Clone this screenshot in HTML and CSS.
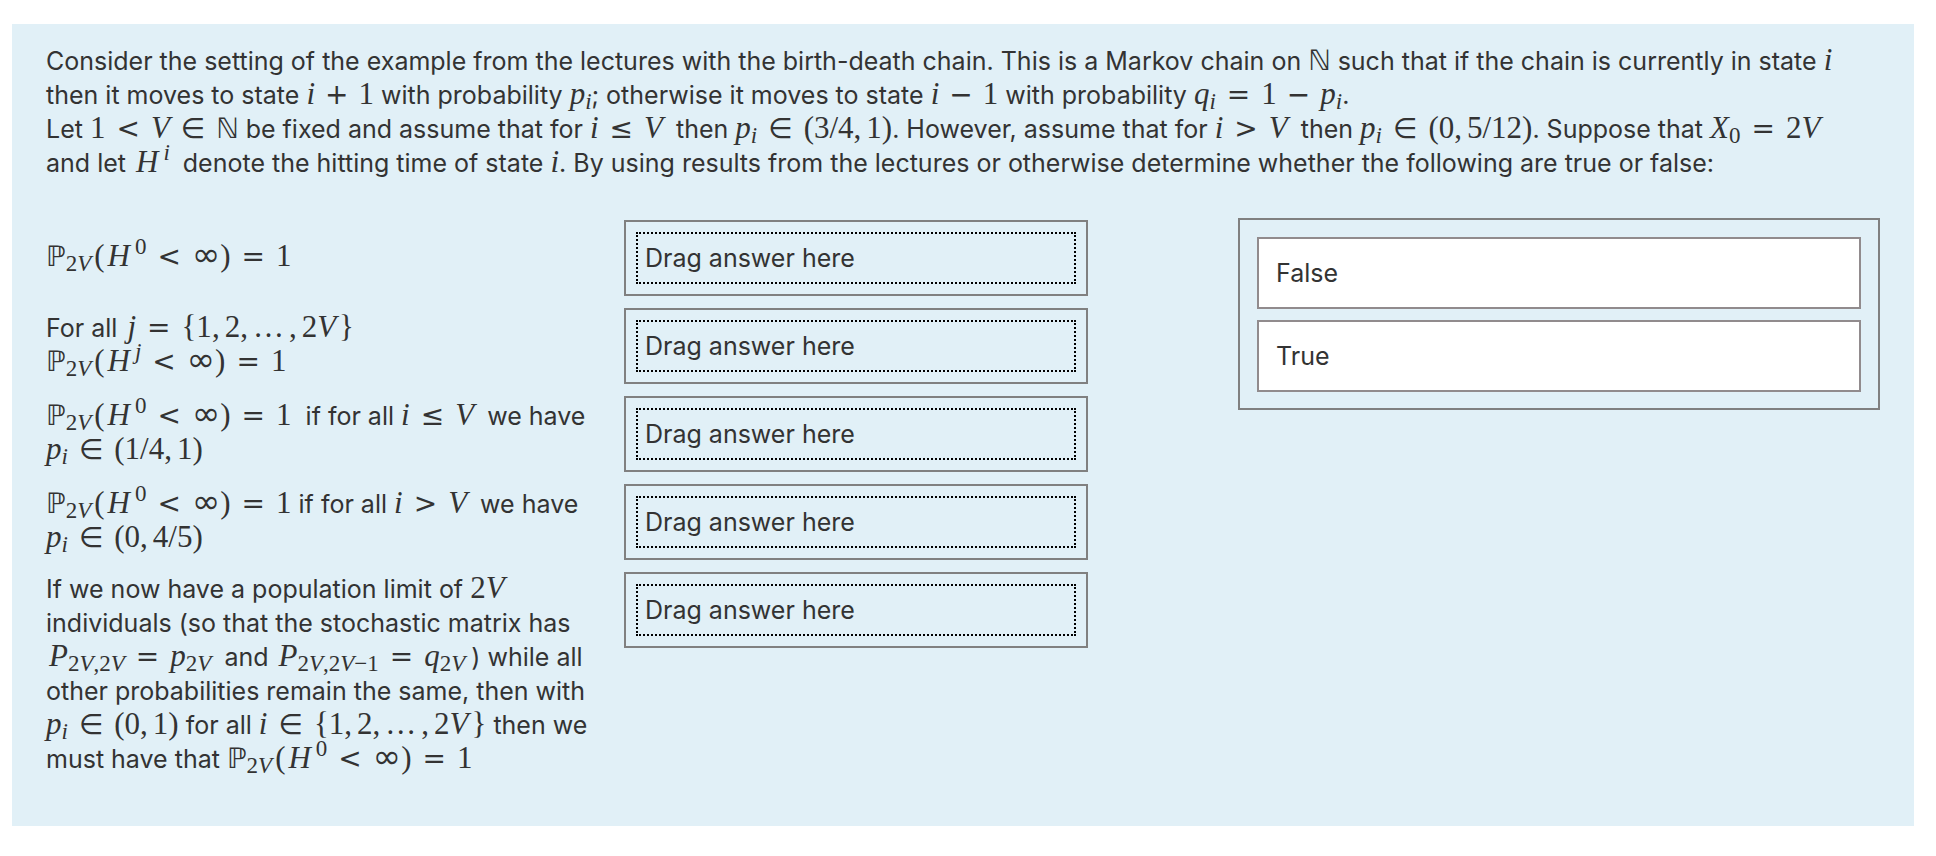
FILE: index.html
```html
<!DOCTYPE html>
<html lang="en">
<head>
<meta charset="utf-8">
<title>Birth-death chain question</title>
<link rel="stylesheet" href="styles.css">
</head>
<body>
<main class="question">
  <div class="stem">
    <p>Consider the setting of the example from the lectures with the birth-death chain. This is a Markov chain on <span class="math"><span class="bb">ℕ</span></span> such that if the chain is currently in state <span class="math"><i>i</i></span> then it moves to state <span class="math"><i>i</i><span class="op">+</span>1</span> with probability <span class="math"><i>p</i><sub><i>i</i></sub></span>; otherwise it moves to state <span class="math"><i>i</i><span class="op">−</span>1</span> with probability <span class="math"><i>q</i><sub><i>i</i></sub><span class="rel">=</span>1<span class="op">−</span><i>p</i><sub><i>i</i></sub></span>.</p>
    <p>Let <span class="math">1<span class="rel">&lt;</span><i>V</i><span class="rel">∈</span><span class="bb">ℕ</span></span> be fixed and assume that for <span class="math"><i>i</i><span class="rel">≤</span><i class="tail">V</i></span> then <span class="math"><i>p</i><sub><i>i</i></sub><span class="rel">∈</span>(3/4<span class="comma">,</span>1)</span>. However, assume that for <span class="math"><i>i</i><span class="rel">&gt;</span><i class="tail">V</i></span> then <span class="math"><i>p</i><sub><i>i</i></sub><span class="rel">∈</span>(0<span class="comma">,</span>5/12)</span>. Suppose that <span class="math"><i>X</i><sub>0</sub><span class="rel">=</span>2<i>V</i></span><br>and let <span class="math"><i class="cap">H</i><sup class="tail"><i>i</i></sup></span> denote the hitting time of state <span class="math"><i>i</i></span>. By using results from the lectures or otherwise determine whether the following are true or false:</p>
  </div>

  <div class="matching">
    <ul class="prompts">
      <li class="prompt">
        <div class="statement"><span class="math"><span class="bb">ℙ</span><sub>2<i>V</i></sub><span class="paren">(</span><i class="cap">H</i><sup>0</sup><span class="rel">&lt;</span><span class="inf">∞</span>)<span class="rel">=</span>1</span></div>
        <div class="drop"><span class="drop-hint">Drag answer here</span></div>
      </li>
      <li class="prompt">
        <div class="statement">For all <span class="math"><i class="cap">j</i><span class="rel">=</span>{1<span class="comma">,</span>2<span class="comma">,</span>…<span class="comma gap">,</span>2<i>V</i><span class="paren">}</span></span><br><span class="math"><span class="bb">ℙ</span><sub>2<i>V</i></sub><span class="paren">(</span><i class="cap">H</i><sup><i>j</i></sup><span class="rel">&lt;</span><span class="inf">∞</span>)<span class="rel">=</span>1</span></div>
        <div class="drop"><span class="drop-hint">Drag answer here</span></div>
      </li>
      <li class="prompt">
        <div class="statement"><span class="math"><span class="bb">ℙ</span><sub>2<i>V</i></sub><span class="paren">(</span><i class="cap">H</i><sup>0</sup><span class="rel">&lt;</span><span class="inf">∞</span>)<span class="rel">=</span>1</span>&nbsp; if for all <span class="math"><i>i</i><span class="rel">≤</span><i class="tail">V</i></span> we have <span class="math"><i>p</i><sub><i>i</i></sub><span class="rel">∈</span>(1/4<span class="comma">,</span>1)</span></div>
        <div class="drop"><span class="drop-hint">Drag answer here</span></div>
      </li>
      <li class="prompt">
        <div class="statement"><span class="math"><span class="bb">ℙ</span><sub>2<i>V</i></sub><span class="paren">(</span><i class="cap">H</i><sup>0</sup><span class="rel">&lt;</span><span class="inf">∞</span>)<span class="rel">=</span>1</span> if for all <span class="math"><i>i</i><span class="rel">&gt;</span><i class="tail">V</i></span> we have <span class="math"><i>p</i><sub><i>i</i></sub><span class="rel">∈</span>(0<span class="comma">,</span>4/5)</span></div>
        <div class="drop"><span class="drop-hint">Drag answer here</span></div>
      </li>
      <li class="prompt">
        <div class="statement">If we now have a population limit of <span class="math">2<i>V</i></span> individuals (so that the stochastic matrix has <span class="math"><i class="cap">P</i><sub>2<i>V</i>,2<i>V</i></sub><span class="rel">=</span><i>p</i><sub class="tail">2<i>V</i></sub></span> and <span class="math"><i class="cap">P</i><sub>2<i>V</i>,2<i>V</i>−1</sub><span class="rel">=</span><i>q</i><sub class="tail">2<i>V</i></sub></span>) while all other probabilities remain the same, then with <span class="math"><i>p</i><sub><i>i</i></sub><span class="rel">∈</span>(0<span class="comma">,</span>1)</span> for all <span class="math"><i>i</i><span class="rel">∈</span>{1<span class="comma">,</span>2<span class="comma">,</span>…<span class="comma gap">,</span>2<i>V</i><span class="paren">}</span></span> then we must have that <span class="math"><span class="bb">ℙ</span><sub>2<i>V</i></sub><span class="paren">(</span><i class="cap">H</i><sup>0</sup><span class="rel">&lt;</span><span class="inf">∞</span>)<span class="rel">=</span>1</span></div>
        <div class="drop"><span class="drop-hint">Drag answer here</span></div>
      </li>
    </ul>

    <div class="bank">
      <button class="answer" type="button" draggable="true">False</button>
      <button class="answer" type="button" draggable="true">True</button>
    </div>
  </div>
</main>
</body>
</html>
```

FILE: styles.css
```css
* {
  box-sizing: border-box;
}

body {
  margin: 0;
  padding: 24px 22px 30px 12px;
  background: #fff;
  color: #333;
  font-family: Inter, "Liberation Sans", sans-serif;
  font-size: 25px;
  line-height: 34px;
}

.question {
  padding: 20px 34px 48px;
  background: #e1f0f7;
}

.stem {
  margin-bottom: 38px;
}

.stem p {
  margin: 0;
}

.matching {
  display: grid;
  grid-template-columns: 1042fr 642fr;
  column-gap: 150px;
  align-items: start;
}

.prompts {
  display: grid;
  row-gap: 12px;
  margin: 0;
  padding: 2px 0 0;
  list-style: none;
}

.prompt {
  display: grid;
  grid-template-columns: 566fr 464fr;
  column-gap: 12px;
  align-items: start;
}

.statement {
  align-self: center;
  padding-bottom: 2px;
}

.drop {
  padding: 10px;
  border: 2px solid #808080;
}

.drop-hint {
  display: block;
  padding: 7px;
  border: 2px dotted #000;
}

.bank {
  display: grid;
  row-gap: 11px;
  padding: 17px 17px 16px;
  border: 2px solid #808080;
}

.answer {
  padding: 17px;
  border: 2px solid #918b8d;
  background: #fff;
  color: inherit;
  font: inherit;
  text-align: left;
  cursor: move;
}

.math {
  font-family: "Liberation Serif", "DejaVu Serif", serif;
  font-size: 31px;
  line-height: 1px;
  white-space: nowrap;
}

.math sub,
.math sup {
  font-size: 23px;
  line-height: 1px;
}

.math sub {
  vertical-align: -5px;
}

.math sup {
  margin-left: 5px;
  vertical-align: 12px;
}

.math .tail {
  margin-right: 6px;
}

.cap {
  margin-left: 3px;
}

.bb {
  font-family: "DejaVu Sans", sans-serif;
  font-size: 28px;
}

.rel,
.op {
  font-family: "DejaVu Sans", sans-serif;
  font-size: 28px;
}

.rel {
  margin: 0 11px;
}

.op {
  margin: 0 10px;
}

.inf {
  font-family: "DejaVu Sans", sans-serif;
  font-size: 34px;
}

.comma {
  margin-right: 5px;
}

.gap {
  margin-left: 5px;
}

.paren {
  margin-left: 3px;
}
```
